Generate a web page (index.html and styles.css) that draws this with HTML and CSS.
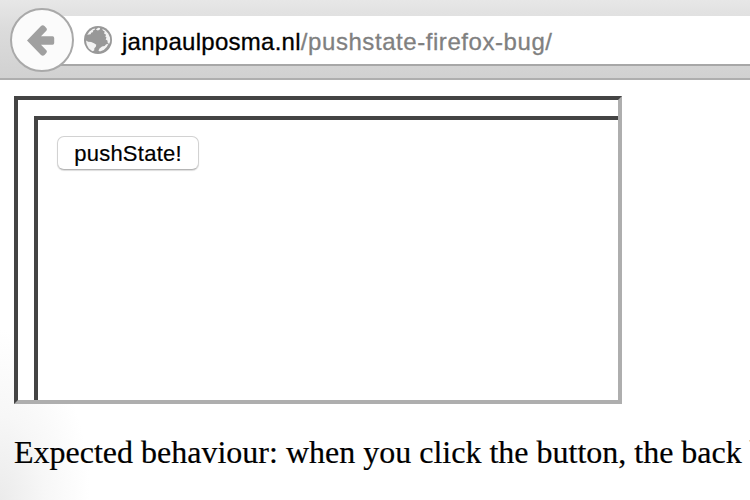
FILE: index.html
```html
<!DOCTYPE html>
<html lang="en">
<head>
<meta charset="utf-8">
<title>pushState bug</title>
<link rel="stylesheet" href="styles.css">
</head>
<body>
<header class="toolbar">
  <button class="back" aria-label="Back">
    <svg width="28" height="31" viewBox="0 0 28 31"><path d="M0 15.5 14 1.1q1.8-1.5 3.5 0l1.6 1.7q1.6 1.6 0 3.3L14 11.3h11.6q1.6 0 1.6 1.6v5.2q0 1.6-1.6 1.6H14l5.1 5.2q1.6 1.7 0 3.3l-1.6 1.7q-1.7 1.5-3.5 0Z" fill="#a0a0a0"/></svg>
  </button>
  <div class="field">
    <svg class="globe" width="28" height="28" viewBox="0 0 28 28">
      <circle cx="14" cy="14" r="14" fill="#989898"/>
      <g fill="#f3f3f3">
        <path d="m3.2 9 2-3.2L8.8 3l2.4-.6-.5 1.4-2 1 .5 1.3-2 .6-.6 1.6-1.8.3Z"/>
        <path d="m11.8 3.6 2.4-1.8 2 .2-.6 1.8-1.8.8Z"/>
        <path d="m18.2 2.8 3.2 1.6 2.8 3 1.8 4 .2 3.8-.9 2.6-1.5-.6-.4-2.6-1.7-1.2.8-2-1.2-1 .8-1.7-2-1.2.6-2-1.7-1Z"/>
        <path d="m2 14.6 2.2 1.2 3 .2 2.8 1.2 2.3 1.6-.5 2-1.4 1.4-.2 2.3-1.8.7-3.6-2.8-2.1-3.8Z"/>
        <path d="m15.5 22.4 2.5-1.8 2.6-.6 1.6-1.8 2.2-.3-1.7 3.2-3 2.8-3.8 1.5-1.5-.8Z"/>
      </g>
    </svg>
    <span class="url"><span class="host">janpaulposma.nl</span>/pushstate-firefox-bug/</span>
  </div>
</header>
<main>
  <div class="frame">
    <div class="inner-frame"><button class="push">pushState!</button></div>
  </div>
  <p class="expected">Expected behaviour: when you click the button, the back b</p>
</main>
</body>
</html>
```
FILE: styles.css
```css
* { box-sizing: border-box; }
body {
  margin: 0;
  width: 750px;
  height: 500px;
  overflow: hidden;
  background: radial-gradient(ellipse 90px 170px at 0 500px, #ebebeb, #f7f7f7 50%, #fff);
}
.toolbar {
  display: flex;
  height: 80px;
  padding: 8px 0 0 10px;
  background: linear-gradient(#e7e7e7, #dcdcdc 35%, #d1d1d1);
  border-bottom: 2px solid #aeaeae;
}
.back {
  position: relative;
  z-index: 1;
  display: flex;
  align-items: center;
  flex: none;
  width: 64px;
  height: 64px;
  padding: 0 0 0 15px;
  border: 2px solid #a9a9a9;
  border-radius: 50%;
  background: #fbfbfb;
}
.field {
  display: flex;
  align-items: center;
  flex: 1;
  height: 50px;
  margin: 8px 0 0 -24px;
  padding-left: 34px;
  border-bottom: 2px solid #a7a7a7;
  background: #fff;
}
.globe { flex: none; }
.url {
  margin-left: 10px;
  padding-top: 3px;
  font: 24px/30px "Liberation Sans", Arial, sans-serif;
  letter-spacing: .56px;
  white-space: nowrap;
  color: #808080;
  -webkit-text-stroke: .3px #808080;
}
.host {
  letter-spacing: .27px;
  color: #000;
  -webkit-text-stroke: .3px #000;
}
main { padding: 16px 0 0 14px; }
.frame {
  width: 608px;
  height: 308px;
  padding: 16px 0 0 16px;
  border: 4px solid;
  border-color: #444 #aeaeae #aeaeae #444;
  background: #fff;
}
.inner-frame {
  height: 284px;
  padding: 16px 0 0 19px;
  border: solid #444;
  border-width: 4px 0 0 4px;
}
.push {
  display: block;
  width: 142px;
  height: 34px;
  padding: 2px 0 0;
  border: 1px solid #d2d2d2;
  border-bottom-color: #b5b5b5;
  border-radius: 7px;
  background: #fff;
  box-shadow: 0 1px 1px #ddd;
  font: 22px/28px "Liberation Sans", Arial, sans-serif;
  letter-spacing: .25px;
  color: #000;
  -webkit-text-stroke: .2px #000;
}
.expected {
  margin: 30px 0 0;
  font: 32px/37px "Liberation Serif", "Times New Roman", serif;
  white-space: nowrap;
  color: #000;
  -webkit-text-stroke: .2px #000;
}
```
